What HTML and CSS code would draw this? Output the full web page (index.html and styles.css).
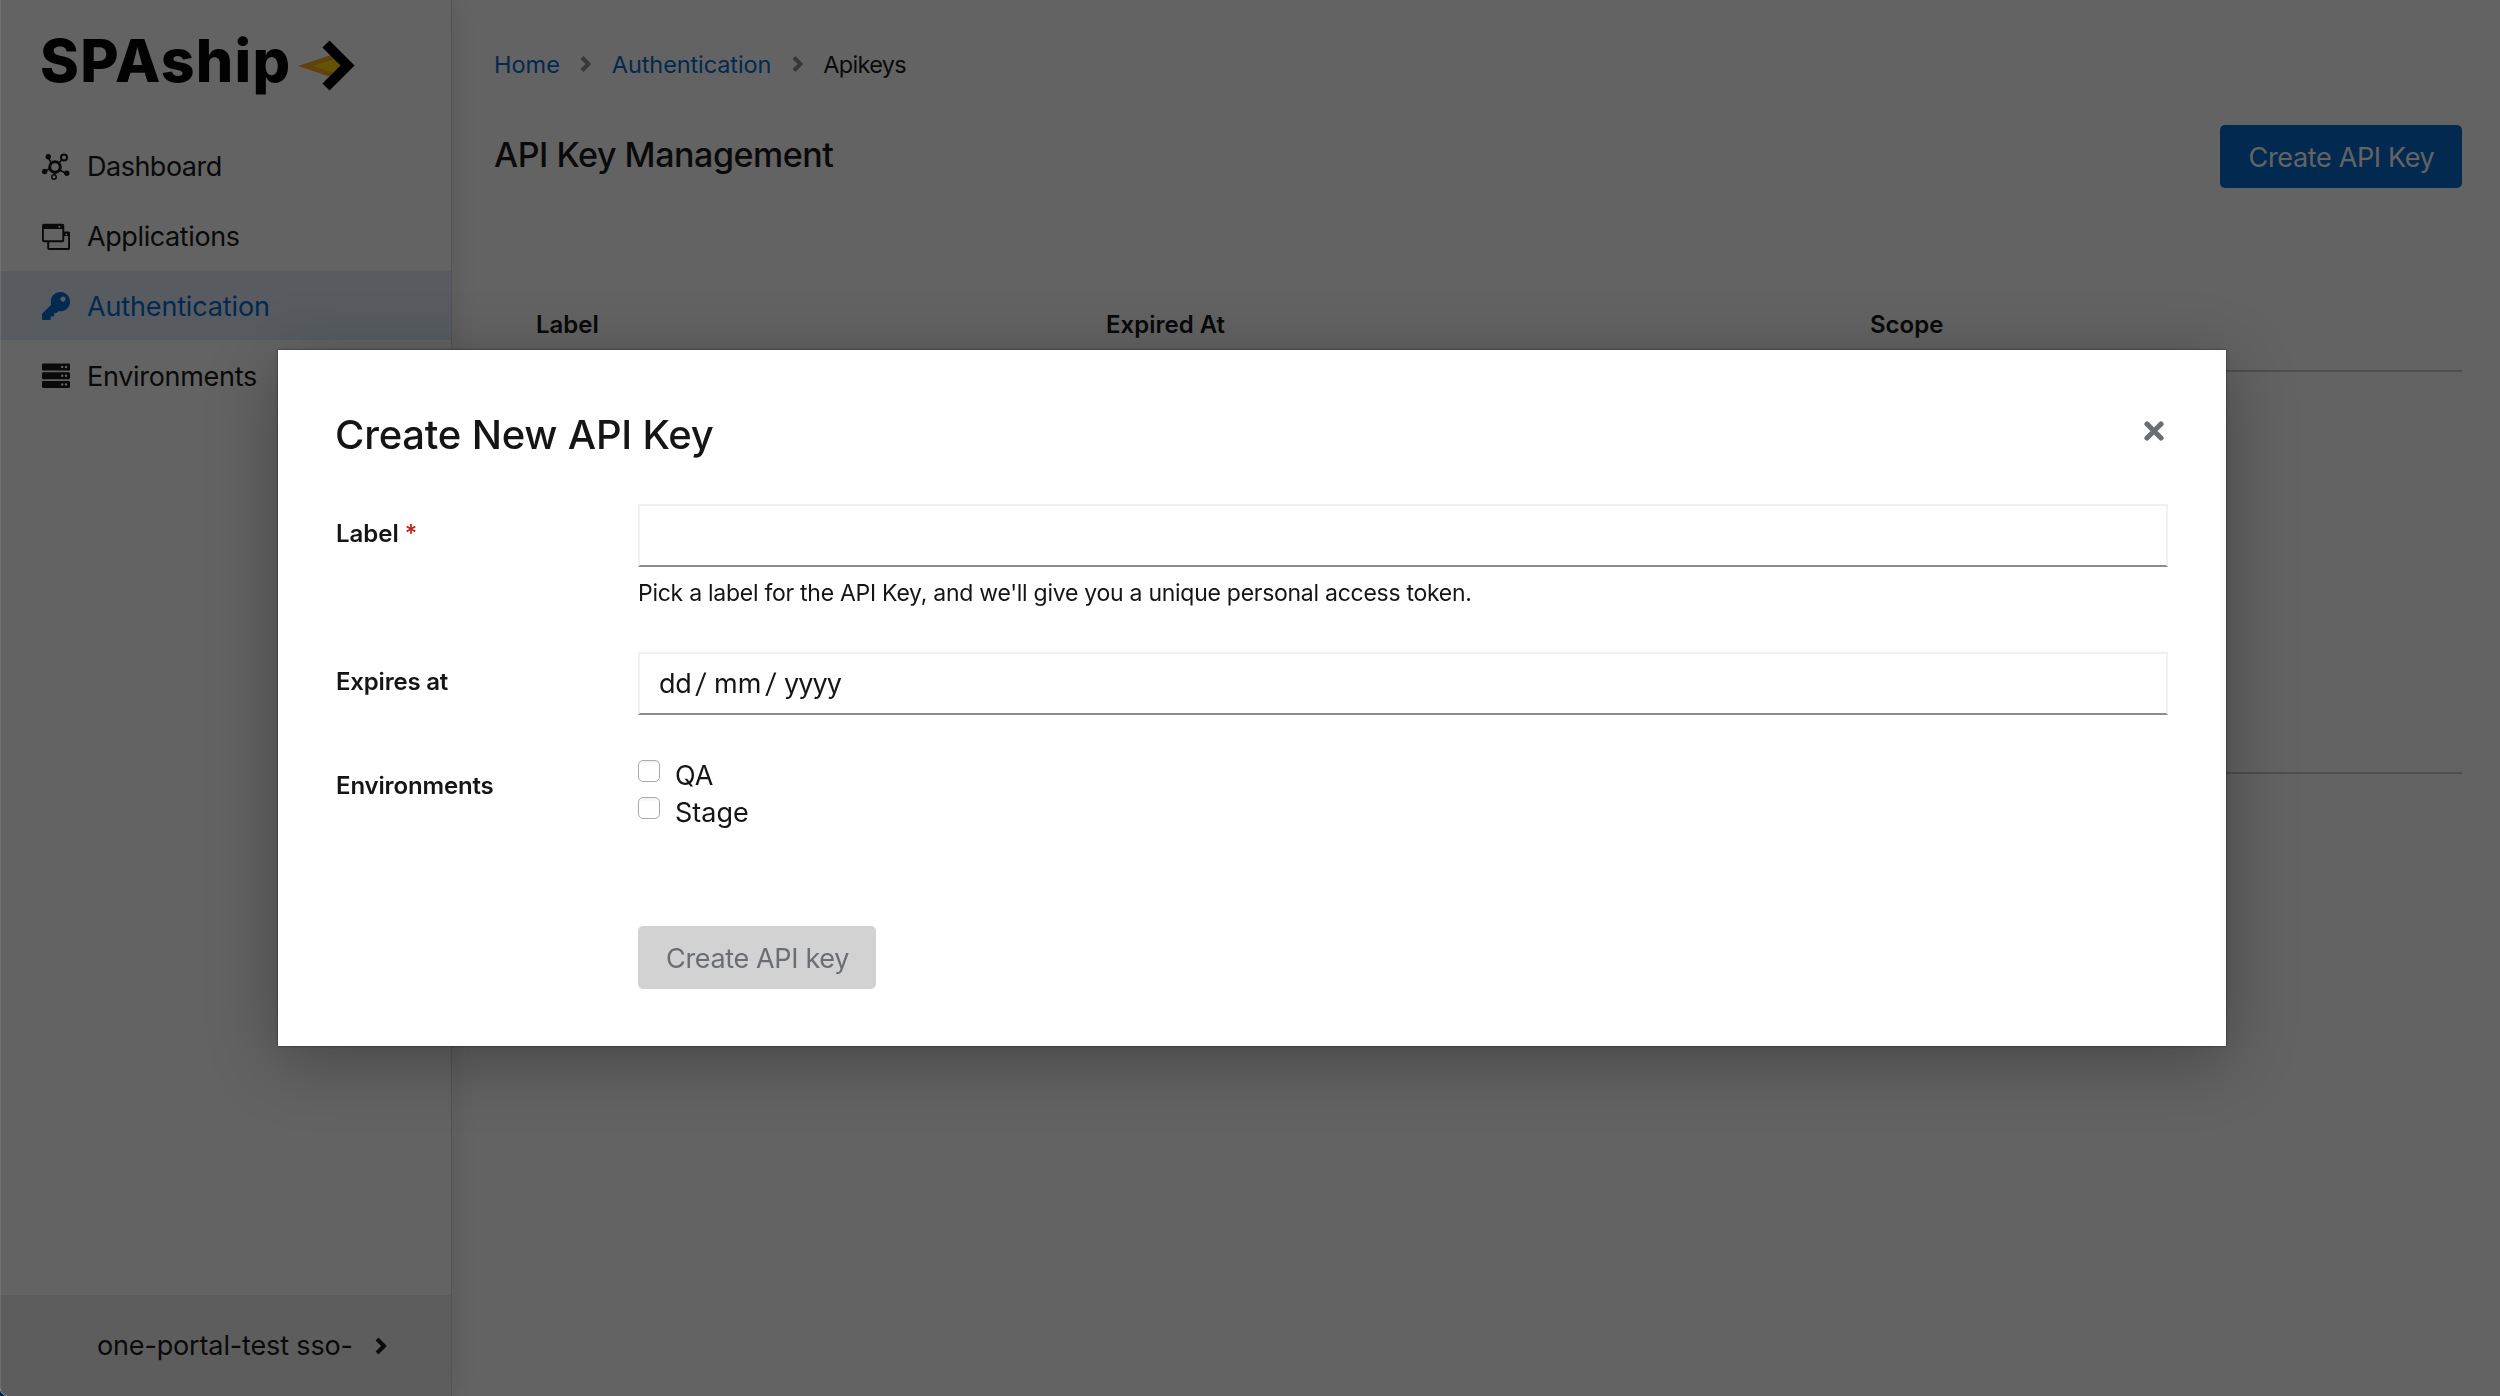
FILE: index.html
```html
<!DOCTYPE html>
<html lang="en">
<head>
<meta charset="utf-8">
<title>SPAship - API Key Management</title>
<link rel="stylesheet" href="styles.css">
</head>
<body>
<div class="page">
  <aside class="sidebar">
    <div class="logo">
      <span class="logo-text">SPAship</span>
      <svg class="logo-mark" width="58" height="52" viewBox="0 0 58 52">
        <path fill="#f5a81c" d="M0 26 33 15 42 26 33 37z"/>
        <path fill="#ffd400" d="M15 26 36 19 42 26 36 33z"/>
        <path fill="none" stroke="#000" stroke-width="10" d="M28 4 49.5 25.500 28 47"/>
      </svg>
    </div>
    <nav class="nav">
      <a class="nav-item dashboard">
        <svg class="icon" viewBox="0 0 28 28">
          <g fill="none" stroke="currentColor">
            <circle cx="13" cy="14" r="5.300" stroke-width="3"/>
            <circle cx="22" cy="4.500" r="3" stroke-width="2"/>
            <circle cx="12" cy="24" r="2.200" stroke-width="1.500"/>
            <path stroke-width="1.500" d="m17 10 3-3.500M9.500 10 7 6M8 15.500l-4 2M17.500 17l6 3M12.500 19v3"/>
          </g>
          <g fill="currentColor"><circle cx="6.300" cy="3.800" r="2.700"/><circle cx="2.700" cy="18.500" r="2.700"/><circle cx="24.800" cy="20.300" r="2.700"/></g>
        </svg>
        <span>Dashboard</span>
      </a>
      <a class="nav-item applications">
        <svg class="icon" viewBox="0 0 28 28">
          <rect x=".9" y="1.800" width="20.400" height="16.400" rx="1" fill="none" stroke="currentColor" stroke-width="1.900"/>
          <path fill="currentColor" fill-rule="evenodd" d="M1 1.500h20.500V6H1zM16.500 2.800v1.700h1.800V2.800zM22 9h6v4h-6z"/>
          <path fill="none" stroke="currentColor" stroke-width="1.900" d="M22 9.500h4.300q.8 0 .8.800v14.900q0 .8-.8.800H7q-.8 0-.8-.8V19"/>
          <path fill="#fff" d="M23.500 10.700h1.700v1.500h-1.700z"/>
        </svg>
        <span>Applications</span>
      </a>
      <a class="nav-item authentication active">
        <svg class="icon" viewBox="0 0 512 512"><path fill="currentColor" d="M512 176.001C512 273.203 433.202 352 336 352c-11.220 0-22.190-1.062-32.827-3.069l-24.012 27.014A23.999 23.999 0 0 1 261.223 384H224v40c0 13.255-10.745 24-24 24h-40v40c0 13.255-10.745 24-24 24H24c-13.255 0-24-10.745-24-24v-78.059c0-6.365 2.529-12.470 7.029-16.971l161.802-161.802C163.108 213.814 160 195.271 160 176 160 78.798 238.797.001 335.999 0 433.488-.001 512 78.511 512 176.001zM336 128c0 26.510 21.490 48 48 48s48-21.490 48-48-21.490-48-48-48-48 21.490-48 48z"/></svg>
        <span>Authentication</span>
      </a>
      <a class="nav-item environments">
        <svg class="icon" viewBox="0 0 28 28">
          <g fill="currentColor"><rect y="1.500" width="28" height="7" rx="1.300"/><rect y="10.200" width="28" height="7" rx="1.300"/><rect y="18.900" width="28" height="7" rx="1.300"/></g>
          <g fill="#fff"><circle cx="20.200" cy="5" r="1.200"/><circle cx="24" cy="5" r="1.200"/><circle cx="20.200" cy="13.700" r="1.200"/><circle cx="24" cy="13.700" r="1.200"/><circle cx="20.200" cy="22.400" r="1.200"/><circle cx="24" cy="22.400" r="1.200"/></g>
        </svg>
        <span>Environments</span>
      </a>
    </nav>
    <div class="account">
      <span>one-portal-test sso-</span>
      <svg width="12" height="18" viewBox="0 0 12 18"><path fill="none" stroke="currentColor" stroke-width="4" d="m2 2 7 7-7 7"/></svg>
    </div>
  </aside>

  <main class="main">
    <div class="breadcrumb">
      <a>Home</a>
      <svg width="11" height="16" viewBox="0 0 11 16"><path d="m2 1.500 6.500 6.500L2 14.500"/></svg>
      <a class="crumb-auth">Authentication</a>
      <svg width="11" height="16" viewBox="0 0 11 16"><path d="m2 1.500 6.500 6.500L2 14.500"/></svg>
      <span class="crumb-current">Apikeys</span>
    </div>
    <div class="page-header">
      <h1>API Key Management</h1>
      <button class="btn primary">Create API Key</button>
    </div>
    <div class="table">
      <div class="row head"><span>Label</span><span>Expired At</span><span>Scope</span></div>
      <div class="row body"></div>
    </div>
  </main>
</div>

<div class="backdrop">
  <section class="modal">
    <header class="modal-header">
      <h2>Create New API Key</h2>
      <svg class="close" width="20" height="20" viewBox="0 0 20 20"><path fill="none" stroke="#6a6e73" stroke-width="5.200" stroke-linecap="round" d="m3 3 14 14M17 3 3 17"/></svg>
    </header>
    <form class="form">
      <div class="field field-label">
        <label>Label <span class="required">*</span></label>
        <div class="control">
          <div class="input"></div>
          <p class="helper">Pick a label for the API Key, and we'll give you a unique personal access token.</p>
        </div>
      </div>
      <div class="field field-date">
        <label>Expires at</label>
        <div class="control">
          <div class="input date"><span class="dd">dd</span><span class="slash">/</span><span class="mm">mm</span><span class="slash">/</span><span class="yyyy">yyyy</span></div>
        </div>
      </div>
      <div class="field field-env">
        <label>Environments</label>
        <div class="control">
          <div class="check"><i class="box"></i><span>QA</span></div>
          <div class="check"><i class="box"></i><span>Stage</span></div>
        </div>
      </div>
      <div class="actions"><button type="button" class="btn disabled" disabled>Create API key</button></div>
    </form>
  </section>
</div>
</body>
</html>
```
FILE: styles.css
```css
* { box-sizing: border-box; }
body {
  margin: 0;
  font-family: Inter, "Liberation Sans", sans-serif;
  font-size: 27px;
  font-weight: 370;
  color: #151515;
  background: #04203f;
  overflow: hidden;
}
h1, h2, p { margin: 0; }
.page {
  display: flex;
  height: 1396px;
  overflow: hidden;
  background: #fff;
  border-bottom-left-radius: 8px;
}

.sidebar {
  width: 451px;
  display: flex;
  flex-direction: column;
  box-shadow: 1px 0 0 #d8d8d8, 4px 0 24px rgba(3, 3, 3, .1);
}
.logo { display: flex; height: 131px; padding: 27px 0 0 40px; }
.logo-text {
  width: 257px;
  font-size: 59px;
  font-weight: 800;
  line-height: 68px;
  letter-spacing: 1.3px;
  color: #000;
}
.logo-mark { margin: 13px 0 0 1px; }
.nav { display: flex; flex-direction: column; flex: 1; }
.nav-item {
  display: flex;
  align-items: center;
  gap: 17px;
  height: 69.8px;
  padding: 2px 0 0 42px;
}
.icon { width: 28px; height: 28px; }
.dashboard { letter-spacing: -.5px; }
.applications { letter-spacing: -.4px; }
.authentication { letter-spacing: -.15px; }
.environments { letter-spacing: -.3px; }
.nav-item.active { color: #06c; background: #e1edf9; }
.account {
  display: flex;
  align-items: center;
  gap: 22px;
  height: 101px;
  padding-left: 97px;
  background: #f0f0f0;
  letter-spacing: -.15px;
}

.main { flex: 1; padding: 45px 38px 0 43px; }
.breadcrumb {
  display: flex;
  align-items: center;
  height: 39px;
  font-size: 23.5px;
}
.breadcrumb a { color: #06c; }
.breadcrumb svg { margin: 0 20.5px 2px; fill: none; stroke: #8a8d90; stroke-width: 4px; }
.crumb-auth { letter-spacing: -.1px; }
.crumb-current { letter-spacing: -.7px; }
.page-header {
  display: flex;
  justify-content: space-between;
  margin-top: 41px;
}
h1 { font-size: 34px; font-weight: 500; line-height: 60px; letter-spacing: -.45px; }
.btn {
  height: 63px;
  padding: 2px 0 0 1px;
  border: 0;
  border-radius: 5px;
  font: inherit;
  letter-spacing: -.35px;
}
.primary { width: 242px; color: #fff; background: #06c; }
.table { margin-top: 89px; }
.row {
  display: grid;
  grid-template-columns: 570px 764px 1fr;
  border-bottom: 2px solid #c8c8c8;
}
.head { height: 95px; font-size: 24px; font-weight: 600; line-height: 96px; }
.head span { padding-left: 42px; }
.body { height: 402px; }

.backdrop {
  position: fixed;
  inset: 0;
  display: flex;
  align-items: center;
  justify-content: center;
  padding-left: 4px;
  background: rgba(3, 3, 3, .62);
  box-shadow: inset 1px 0 0 rgba(255, 255, 255, .1);
  border-bottom-left-radius: 8px;
}
.modal {
  width: 1948px;
  height: 696px;
  padding: 58px 58px 0;
  background: #fff;
  box-shadow: 0 0 2px rgba(3, 3, 3, .6), 0 14px 64px rgba(3, 3, 3, .3);
}
.modal-header { display: flex; justify-content: space-between; height: 96px; }
h2 { font-size: 40px; font-weight: 500; line-height: 54px; margin-left: -1px; letter-spacing: -.2px; }
.close { margin: 13px 4px 0 0; }
.form { display: flex; flex-direction: column; }
.field { display: grid; grid-template-columns: 302px 1fr; }
.field label { font-size: 24px; font-weight: 600; line-height: 30px; }
.field-label { height: 148px; }
.field-date { height: 107px; }
.field-env { height: 167px; }
.field-label label, .field-date label { margin-top: 15px; }
.field-date label { letter-spacing: -.2px; }
.field-env label { margin-top: 12px; letter-spacing: -.15px; }
.required { color: #c9190b; font-weight: 500; }
.input {
  display: flex;
  height: 63px;
  border: 2px solid #f0f0f0;
  border-bottom-color: #8a8d90;
  line-height: 60px;
}
.helper { margin-top: 9px; font-size: 23px; line-height: 34px; letter-spacing: -.27px; }
.date { padding-left: 19px; }
.dd { width: 37px; letter-spacing: -.3px; }
.slash { width: 18px; transform: skewX(-6deg); }
.mm { width: 52px; }
.yyyy { letter-spacing: -.9px; }
.check { display: flex; gap: 15px; height: 37px; line-height: 33px; }
.box {
  width: 22px;
  height: 22px;
  margin-top: 1px;
  border: 1.500px solid #aaa;
  border-radius: 5px;
  background: linear-gradient(#f1f1f1, #fff 4px);
}
.actions { padding-left: 302px; }
.disabled { width: 238px; color: #6a6e73; background: #d2d2d2; }
```
